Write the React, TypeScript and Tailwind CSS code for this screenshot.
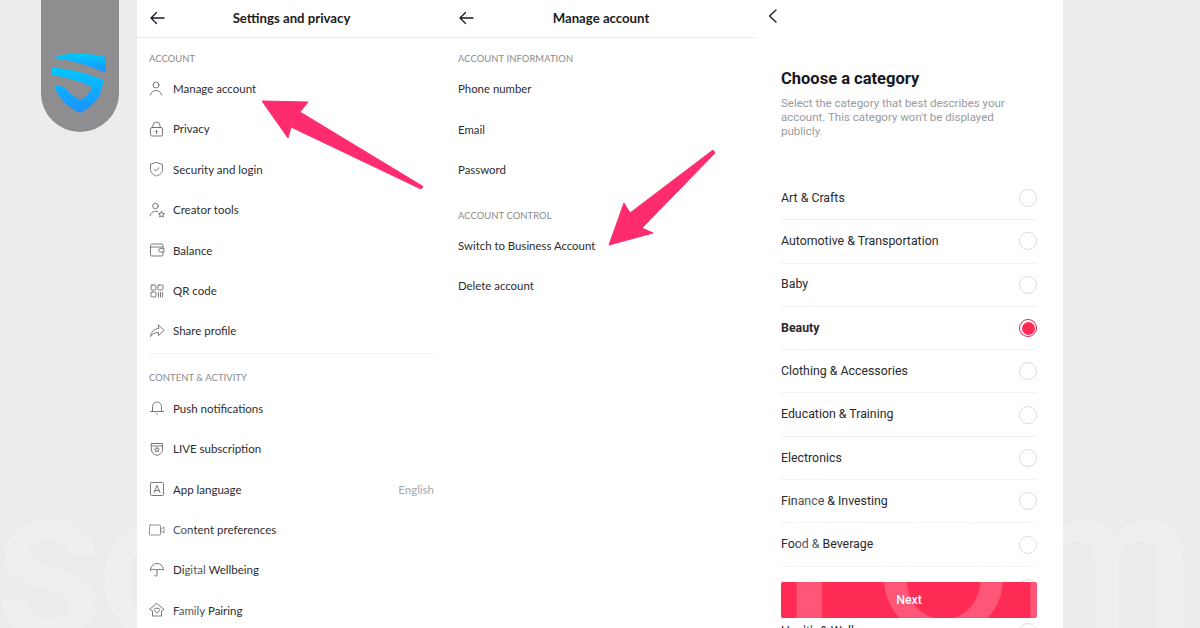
const IC = "w-[16px] h-[16px] shrink-0 text-[#6b6b6b]";

function Svg({ children }: { children: React.ReactNode }) {
  return (
    <svg viewBox="0 0 16 16" fill="none" stroke="currentColor" strokeWidth="0.9" strokeLinecap="round" strokeLinejoin="round" className={IC}>
      {children}
    </svg>
  );
}

const icons: Record<string, React.ReactNode> = {
  user: <><circle cx="7" cy="4" r="3" /><path d="M1.500 14c.5-3 2.800-4.500 5.500-4.500s5 1.500 5.500 4.500" /></>,
  lock: <><rect x="1.500" y="6.500" width="12" height="8.500" rx="1.500" /><path d="M4 6.500V4.500a3.500 3.500 0 0 1 7 0v2" /><path d="M7.500 9.500v3M6.500 10.500l1-1 1 1" /></>,
  shield: <><path d="M7.500 1.500l6 2v5c0 3.500-3 5.500-6 6.500-3-1-6-3-6-6.500v-5z" /><path d="M5.300 8.200l1.600 1.600 3-3" /></>,
  creator: <><circle cx="6.500" cy="4" r="2.800" /><path d="M1 14c.5-3 2.800-4.800 5.500-4.800 1 0 1.800.2 2.500.6" /><path d="M12.500 9.500l1 1.900 2 .2-1.500 1.400.4 2-1.900-1-1.900 1 .4-2-1.500-1.400 2-.2z" /></>,
  wallet: <><path d="M14 6V3.200A1.200 1.200 0 0 0 12.800 2H3.200A1.700 1.700 0 0 0 1.500 3.700v9.100A1.200 1.200 0 0 0 2.700 14h10.100a1.200 1.200 0 0 0 1.200-1.200V10" /><path d="M1.500 5h12.500" /><path d="M14.500 6.500h-3a1.700 1.700 0 0 0 0 3.500h3z" /></>,
  qr: <><rect x="2" y="2" width="5" height="5" rx="1" /><rect x="9" y="2" width="5" height="5" rx="1" /><rect x="2" y="9" width="5" height="5" rx="1" /><path d="M9.500 9.500v4.500M11.500 9.500v4.500M13.500 9.500v4.500" /></>,
  share: <path d="M9.500 2l5.500 5.500-5.500 5v-3c-3.500 0-6 1-8 4 .5-4.500 3.500-7.500 8-8z" />,
  bell: <><path d="M3.500 11.500V6.500a4.500 4.500 0 0 1 9 0v5" /><path d="M1.500 11.500h13" /><path d="M7.500 14h1" /></>,
  live: <><path d="M2.500 2.500h11v7c0 2.500-3 4-5.500 5-2.500-1-5.500-2.500-5.500-5z" /><path d="M2.500 5h11" /><path d="M8 6.500l.8 1.500 1.600.2-1.200 1.100.3 1.500-1.500-.8-1.500.8.300-1.500-1.200-1.100 1.600-.2z" /></>,
  lang: <><rect x="1.500" y="1.500" width="13" height="13" rx="1" /><path d="M5 11.500l3-7 3 7M6 9.500h4" /></>,
  video: <><rect x="0.500" y="3" width="11" height="10" rx="1" /><path d="M12 7l3-2v6l-3-2z" /></>,
  umbrella: <><path d="M1.500 8a6.500 6.500 0 0 1 13 0c-2-.8-4-.8-6.500 0-2.500-.8-4.500-.8-6.500 0z" /><path d="M8 8v5c0 1.500-2 1.500-2.500.5" /></>,
  family: <><path d="M8 1.500l7 6-2.500 1.500V14h-9V9L1 7.500z" /><path d="M8 11l-2.500-2.500a1.500 1.500 0 0 1 2.500-1.700 1.500 1.500 0 0 1 2.500 1.700z" /></>,
};

function Row({ icon, label, right }: { icon: string; label: string; right?: string }) {
  return (
    <div className="flex items-center h-[40.4px] text-[11.5px] text-[#2d2d30]">
      <span className="flex w-[24px] shrink-0"><Svg>{icons[icon]}</Svg></span>
      <span className="flex-1">{label}</span>
      {right && <span className="text-[#a8a8a8]">{right}</span>}
    </div>
  );
}

function Plain({ label }: { label: string }) {
  return <div className="flex items-center h-[40.4px] text-[11.4px] text-[#2d2d30]">{label}</div>;
}

function Section({ children }: { children: React.ReactNode }) {
  return <div className="text-[9.4px] leading-[12px] tracking-[0.1px] text-[#8a8a8a]">{children}</div>;
}

function Header({ title }: { title: string }) {
  return (
    <div className="relative flex items-center justify-center h-[37px] font-bold text-[13.2px] text-[#1c1c1e]">
      <svg viewBox="0 0 16 16" fill="none" stroke="#161823" strokeWidth="1.300" strokeLinecap="round" strokeLinejoin="round" className="absolute left-[12px] top-[10px] w-[16px] h-[16px]">
        <path d="M15 8H2M7.500 2.500L2 8l5.500 5.500" />
      </svg>
      {title}
    </div>
  );
}

function Radio({ on }: { on?: boolean }) {
  return on ? (
    <span className="flex items-center justify-center w-[18px] h-[18px] rounded-full border border-[#e0274e] bg-white">
      <span className="w-[13px] h-[13px] rounded-full bg-[#fe2c55]" />
    </span>
  ) : (
    <span className="w-[18px] h-[18px] rounded-full border border-[#dcdcdc]" />
  );
}

const cats = ["Art & Crafts", "Automotive & Transportation", "Baby", "Beauty", "Clothing & Accessories", "Education & Training", "Electronics", "Finance & Investing", "Food & Beverage", "", "Health & Wellness"];

function Shield() {
  return (
    <svg viewBox="0 0 56 64" className="w-[56px] h-[64px]">
      <defs>
        <linearGradient id="sg" x1="0" y1="0" x2="0" y2="1">
          <stop offset="0" stopColor="#00c8ff" />
          <stop offset="1" stopColor="#1e90ff" />
        </linearGradient>
      </defs>
      <path fill="url(#sg)" d="M3 5C18 2 38 2 54 6V22C38 15 20 9 3 7Z" />
      <path fill="url(#sg)" d="M0 16C18 18 38 23 51 29C51 46 40 56 28 62C15 56 6 47 2 34L13 36C17 42 23 46 28 49C34 46 38 41 40 36C28 30 12 26 0 24Z" />
    </svg>
  );
}

export default function App() {
  return (
    <div className="relative w-[1200px] h-[628px] overflow-hidden bg-[#ececec] font-['Lato',sans-serif]">
      {/* logo tab */}
      <div className="absolute left-[41px] top-0 w-[78px] h-[132px] rounded-b-[39px] bg-[#8e8e90] flex justify-center pt-[51px]">
        <Shield />
      </div>

      <div className="ml-[137px] w-[926px] h-[628px] bg-white flex">
        {/* settings */}
        <div className="w-[309px] h-full flex flex-col">
          <div className="border-b border-[#ededed]"><Header title="Settings and privacy" /></div>
          <div className="pl-[12px] pr-[12px] pt-[15px]">
            <Section>ACCOUNT</Section>
            <div className="mt-[3.5px]">
              <Row icon="user" label="Manage account" />
              <Row icon="lock" label="Privacy" />
              <Row icon="shield" label="Security and login" />
              <Row icon="creator" label="Creator tools" />
              <Row icon="wallet" label="Balance" />
              <Row icon="qr" label="QR code" />
              <Row icon="share" label="Share profile" />
            </div>
            <div className="border-t border-[#efefef] mt-[2px] pt-[18px]">
              <Section>CONTENT &amp; ACTIVITY</Section>
            </div>
            <div className="mt-[4px]">
              <Row icon="bell" label="Push notifications" />
              <Row icon="live" label="LIVE subscription" />
              <Row icon="lang" label="App language" right="English" />
              <Row icon="video" label="Content preferences" />
              <Row icon="umbrella" label="Digital Wellbeing" />
              <Row icon="family" label="Family Pairing" />
            </div>
          </div>
        </div>

        {/* manage */}
        <div className="w-[310px] h-full flex flex-col">
          <div className="border-b border-[#ededed]"><Header title="Manage account" /></div>
          <div className="pl-[12px] pt-[15px]">
            <Section>ACCOUNT INFORMATION</Section>
            <div className="mt-[3.5px]">
              <Plain label="Phone number" />
              <Plain label="Email" />
              <Plain label="Password" />
            </div>
            <div className="mt-[20.5px]"><Section>ACCOUNT CONTROL</Section></div>
            <div className="mt-[3px]">
              <Plain label="Switch to Business Account" />
              <Plain label="Delete account" />
            </div>
          </div>
        </div>

        {/* category */}
        <div className="relative flex-1 h-full pl-[25px] pr-[26px] font-['Roboto',sans-serif] overflow-hidden">
          <svg viewBox="0 0 16 16" fill="none" stroke="#161823" strokeWidth="1.300" strokeLinecap="round" strokeLinejoin="round" className="absolute left-[9px] top-[8px] w-[16px] h-[16px]">
            <path d="M11 2L4.500 8l6.500 6" />
          </svg>
          <div className="pt-[69px] text-[16.5px] leading-[20px] font-bold text-[#161823]">Choose a category</div>
          <p className="mt-[7px] text-[11.5px] leading-[14px] text-[#9a9a9e] w-[240px]">
            Select the category that best describes your account. This category won't be displayed publicly.
          </p>
          <div className="mt-[39px]">
            {cats.map((c, i) => (
              <div key={i} className={`flex items-center justify-between h-[43.3px] text-[12.35px] text-[#2a2a2d] ${i < 9 ? "border-b border-[#f3f3f3]" : ""} ${c === "Beauty" ? "font-bold" : ""}`}>
                <span>{c}</span>
                <Radio on={c === "Beauty"} />
              </div>
            ))}
          </div>
          <div className="absolute left-[25px] right-[26px] top-[582px] h-[36px] rounded-[2px] bg-[#fe2c55] flex items-center justify-center text-white text-[12.35px] font-medium">
            Next
          </div>
        </div>
      </div>

      {/* arrows */}
      <svg viewBox="0 0 1200 628" className="absolute inset-0 w-[1200px] h-[628px] pointer-events-none">
        <path fill="#fe2c6e" stroke="#fe2c6e" strokeWidth="1" strokeLinejoin="round" d="M262 101L308 102L300 112L423 186.500L421 189L291 127L288 138Z" />
        <path fill="#fe2c6e" stroke="#fe2c6e" strokeWidth="1" strokeLinejoin="round" d="M609 245L624 203L630 213L713 150L715 153L642 228L653 233Z" />
      </svg>

      {/* watermark */}
      <div className="absolute inset-0 pointer-events-none font-['Roboto',sans-serif] font-medium text-[215px] leading-[215px] text-white/[0.2]">
        <span className="absolute left-[-6px] top-[455px]">s</span>
        <span className="absolute left-[97px] top-[455px]">o</span>
        <span className="absolute left-[782px] top-[455px]">l</span>
        <span className="absolute left-[873px] top-[452px] font-normal origin-left scale-x-[1.15]">o</span>
        <span className="absolute left-[1018px] top-[455px] origin-left scale-x-[0.95]">m</span>
      </div>
    </div>
  );
}
